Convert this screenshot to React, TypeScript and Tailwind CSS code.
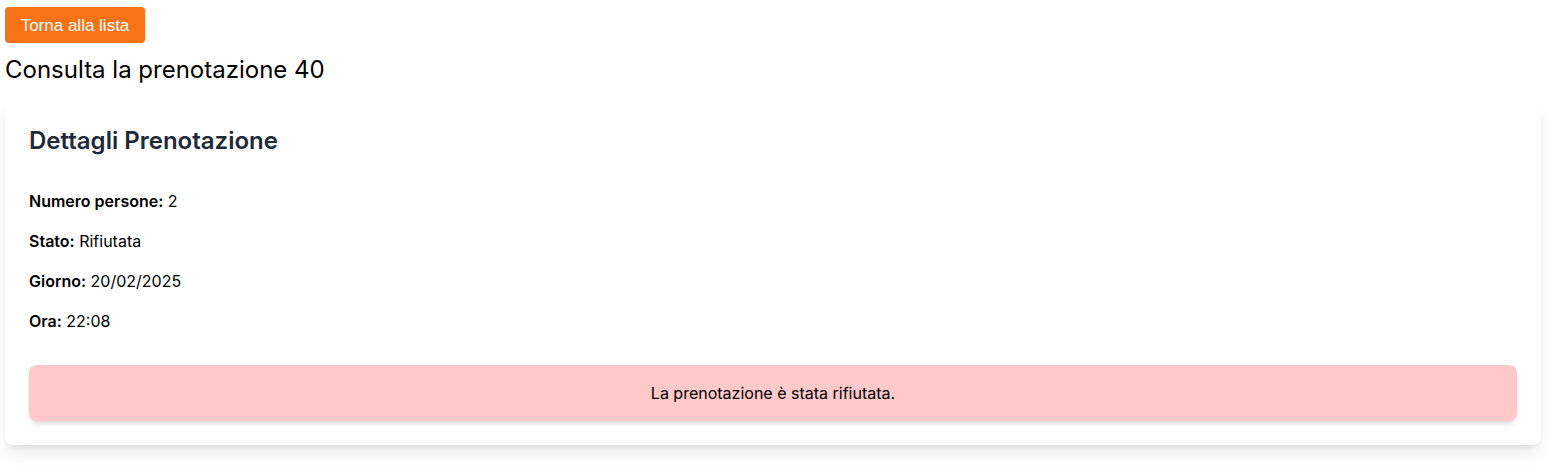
export default function App() {
  const rows = [
    { label: 'Numero persone:', value: '2' },
    { label: 'Stato:', value: 'Rifiutata' },
    { label: 'Giorno:', value: '20/02/2025' },
    { label: 'Ora:', value: '22:08' },
  ];

  return (
    <div className="min-h-screen bg-white px-[5px] pt-[7px] font-['Inter',sans-serif] text-black">
      <button className="block rounded bg-[#f97316] h-9 w-[140px] whitespace-nowrap pt-px text-[17px] leading-9 text-white font-['Liberation_Sans',Arial,sans-serif]">
        Torna alla lista
      </button>
      <h1 className="mt-[11px] text-2xl leading-8">Consulta la prenotazione 40</h1>

      <div className="mt-[15px] w-[1536px] rounded-lg bg-white p-6 shadow-lg">
        <h2 className="mb-8 text-2xl font-semibold text-gray-800">Dettagli Prenotazione</h2>
        <div>
          {rows.map((r) => (
            <p key={r.label} className="mb-4 text-base leading-6">
              <span className="font-semibold">{r.label}</span> {r.value}
            </p>
          ))}
        </div>
        <div className="mt-8 flex h-[56px] items-center justify-center rounded-lg bg-red-200 text-base shadow-md">
          La prenotazione è stata rifiutata.
        </div>
      </div>
    </div>
  );
}
